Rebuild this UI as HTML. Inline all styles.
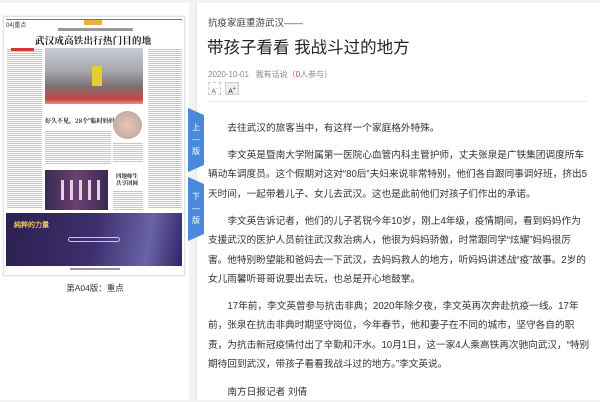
<!DOCTYPE html>
<html><head><meta charset="utf-8"><style>
*{margin:0;padding:0;box-sizing:border-box}
body{width:600px;height:400px;background:#f2f2f2;position:relative;overflow:hidden;font-family:"Liberation Sans","Noto Sans CJK SC",sans-serif}
.abs{position:absolute}
#left{left:0;top:3px;width:189px;height:397px;background:#fff}
#card{left:3px;top:16px;width:182px;height:260px;border:1px solid #e2e2e2;background:#fff;box-shadow:0 0 2px #ddd}
.txt{background:repeating-linear-gradient(#fff 0,#fff 1px,#b9b9b9 1px,#b9b9b9 2px);opacity:.8}
#right{left:196px;top:3px;width:404px;height:397px;background:#fff;border-left:1px solid #e6e6e6}
.tab{left:188px;width:16px;height:64px;background:#4a89dc;clip-path:polygon(0 0,100% 11%,100% 89%,0 100%);color:#fff;font-size:8px;text-align:center;line-height:1;z-index:5}
.tab span{display:block;margin-top:14px;line-height:12px}
.p{position:absolute;left:208px;width:400px;white-space:nowrap;font-size:9.7px;line-height:19.4px;color:#333;letter-spacing:-.05px}
.p i{font-style:normal;display:inline-block;width:19.4px}
</style></head><body>
<div id="left" class="abs"></div>
<div id="card" class="abs"></div>
<div class="abs" style="left:6px;top:19px;width:176px;height:1px;background:#777"></div>
<div class="abs" style="left:6px;top:20px;font-size:6px;color:#333">04|重点</div>
<div class="abs" style="left:84px;top:20px;width:18px;height:5px;background:#e8b040"></div>
<div class="abs" style="left:58px;top:28px;width:75px;height:3px;background:#999"></div>
<div class="abs" style="left:35px;top:33px;font:bold 9.5px 'Noto Serif CJK SC',serif;color:#222;letter-spacing:.2px">武汉成高铁出行热门目的地</div>
<div class="abs txt" style="left:7px;top:48px;width:35px;height:160px"></div>
<div class="abs" style="left:11px;top:48px;width:23px;height:3px;background:#d33"></div>
<div class="abs" style="left:45px;top:48px;width:98px;height:56px;background:linear-gradient(180deg,#c8ccd4 0,#a7a8ae 40%,#7a6f70 70%,#c44 92%,#d98 100%)"></div>
<div class="abs" style="left:92px;top:66px;width:10px;height:20px;background:#e5cf30"></div>
<div class="abs txt" style="left:148px;top:48px;width:34px;height:160px"></div>
<div class="abs txt" style="left:45px;top:130px;width:66px;height:35px"></div>
<div class="abs" style="left:45px;top:116px;font:bold 6px 'Noto Serif CJK SC',serif;color:#222">好久不见，28个"临时妈妈"</div>
<div class="abs" style="left:113px;top:111px;width:29px;height:28px;border-radius:50%;background:radial-gradient(#e8c8b0,#b8a0a0)"></div>
<div class="abs txt" style="left:113px;top:142px;width:30px;height:20px"></div>
<div class="abs" style="left:45px;top:170px;width:63px;height:40px;background:linear-gradient(90deg,#3a2a55,#6a4070,#3a2a55)"></div>
<div class="abs" style="left:55px;top:180px;width:45px;height:20px;background:repeating-linear-gradient(90deg,transparent 0,transparent 6px,#e6d0e0 6px,#e6d0e0 9px)"></div>
<div class="abs" style="left:116px;top:173px;font:bold 5.5px 'Noto Serif CJK SC',serif;color:#222;line-height:7px">四地师生<br>共享团圆</div>
<div class="abs txt" style="left:113px;top:190px;width:30px;height:20px"></div>
<div class="abs" style="left:6px;top:213px;width:176px;height:53px;background:linear-gradient(100deg,#2c2050 0,#3d2f6c 50%,#6a63a8 80%,#2f2560 100%)"></div>
<div class="abs" style="left:14px;top:220px;font:bold 7px serif;color:#e8c060">純粹的力量</div>
<div class="abs" style="left:68px;top:237px;width:52px;height:5px;border:1px solid #ccc;border-radius:3px"></div>
<div class="abs" style="left:70px;top:268px;width:50px;height:2px;background:#999"></div>
<div class="abs" style="left:0;top:282px;width:190px;text-align:center;font-size:8.5px;color:#333">第A04版：重点</div>
<div id="right" class="abs"></div>
<div class="abs tab" style="top:108px"><span>上<br>—<br>版</span></div>
<div class="abs tab" style="top:177px"><span>下<br>—<br>版</span></div>
<div class="abs" style="left:208px;top:15px;font-size:9.5px;color:#444">抗疫家庭重游武汉——</div>
<div class="abs" style="left:207px;top:34px;font-size:16.5px;color:#222">带孩子看看 我战斗过的地方</div>
<div class="abs" style="left:208px;top:69px;font-size:8px;color:#888">2020-10-01 &nbsp;&nbsp;我有话说（<span style="color:#e33">0</span>人参与）</div>
<div class="abs" style="left:208px;top:82px;width:13px;height:13px;border:1px dashed #ccc;font-size:7px;color:#666;text-align:center;line-height:12px">A<sup style="font-size:5px">-</sup></div>
<div class="abs" style="left:225px;top:82px;width:14px;height:13px;border:1px solid #ccc;background:#eee;font-size:7px;color:#333;text-align:center;line-height:12px">A<sup style="font-size:5px">+</sup></div>
<div class="abs" style="left:208px;top:101px;width:380px;height:1px;background:#e8e8e8"></div>
<div class="p" style="top:119px"><i></i>去往武汉的旅客当中，有这样一个家庭格外特殊。</div>
<div class="p" style="top:146px"><i></i>李文英是暨南大学附属第一医院心血管内科主管护师，丈夫张泉是广铁集团调度所车<br>辆动车调度员。这个假期对这对“80后”夫妇来说非常特别，他们各自跟同事调好班，挤出5<br>天时间，一起带着儿子、女儿去武汉。这也是此前他们对孩子们作出的承诺。</div>
<div class="p" style="top:212px"><i></i>李文英告诉记者，他们的儿子茗锐今年10岁，刚上4年级，疫情期间，看到妈妈作为<br>支援武汉的医护人员前往武汉救治病人，他很为妈妈骄傲，时常跟同学“炫耀”妈妈很厉<br>害。他特别盼望能和爸妈去一下武汉，去妈妈救人的地方，听妈妈讲述战“疫”故事。2岁的<br>女儿雨馨听哥哥说要出去玩，也总是开心地鼓掌。</div>
<div class="p" style="top:297px"><i></i>17年前，李文英曾参与抗击非典；2020年除夕夜，李文英再次奔赴抗疫一线。17年<br>前，张泉在抗击非典时期坚守岗位，今年春节，他和妻子在不同的城市，坚守各自的职<br>责，为抗击新冠疫情付出了辛勤和汗水。10月1日，这一家4人乘高铁再次驰向武汉，“特别<br>期待回到武汉，带孩子看看我战斗过的地方。”李文英说。</div>
<div class="p" style="top:383px"><i></i>南方日报记者 刘倩</div>
</body></html>
